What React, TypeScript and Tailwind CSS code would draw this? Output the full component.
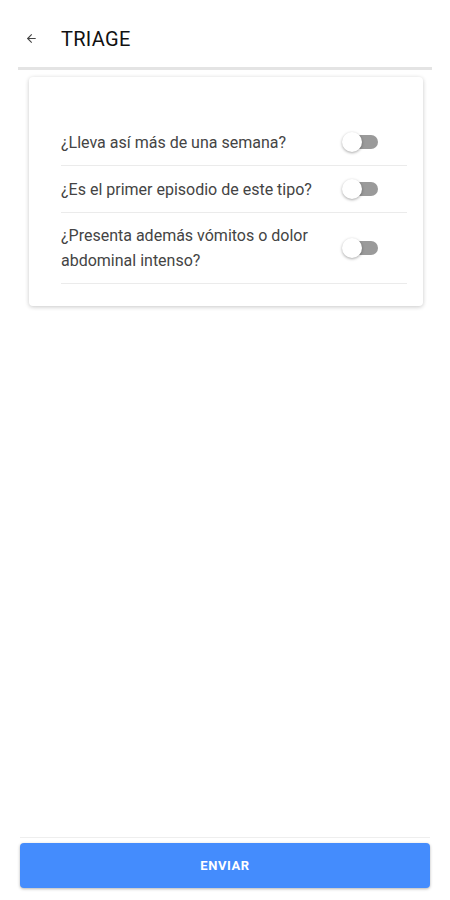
import { ArrowLeft } from 'lucide-react';

const questions = [
  '¿Lleva así más de una semana?',
  '¿Es el primer episodio de este tipo?',
  '¿Presenta además vómitos o dolor abdominal intenso?',
];

function Toggle() {
  return (
    <div className="relative w-[36px] h-[20px] shrink-0">
      <div className="absolute left-[6px] top-[3px] w-[30px] h-[14px] rounded-full bg-[#9a9a9a]" />
      <div className="absolute left-0 top-0 w-5 h-5 rounded-full bg-white shadow-[0_1px_3px_rgba(0,0,0,0.35)]" />
    </div>
  );
}

export default function App() {
  return (
    <div className="h-screen flex flex-col bg-white font-['Roboto',sans-serif]">
      <div className="mx-[18px] h-[70px] pt-[10px] flex items-center border-b-[3px] border-[#e4e4e4]">
        <ArrowLeft className="ml-[7px] text-[#444]" size={13} strokeWidth={2} />
        <h1 className="ml-[23px] text-[20px] font-normal text-[#111] tracking-[0.3px]">TRIAGE</h1>
      </div>

      <div className="ml-[29px] mr-[27px] mt-[7px] rounded-[4px] bg-white shadow-[0_1px_4px_rgba(0,0,0,0.22)] pl-[32px] pr-[16px] pt-[42px] pb-[22px]">
        {questions.map((q, i) => (
          <div
            key={i}
            className={`flex items-center justify-between border-b border-[#ebebeb] pr-[29px] ${
              i === 2 ? 'h-[71px]' : 'h-[47px]'
            }`}
          >
            <span className="text-[16px] leading-[25px] text-[#444] max-w-[262px]">{q}</span>
            <Toggle />
          </div>
        ))}
      </div>

      <div className="flex-1" />

      <div className="mx-[20px] border-t border-[#eeeeee] pt-[5px] pb-[12px]">
        <button className="w-full h-[45px] rounded-[4px] bg-[#448cfd] shadow-[0_1px_3px_rgba(0,0,0,0.3)] text-white text-[13px] font-bold tracking-[0.6px]">
          ENVIAR
        </button>
      </div>
    </div>
  );
}
